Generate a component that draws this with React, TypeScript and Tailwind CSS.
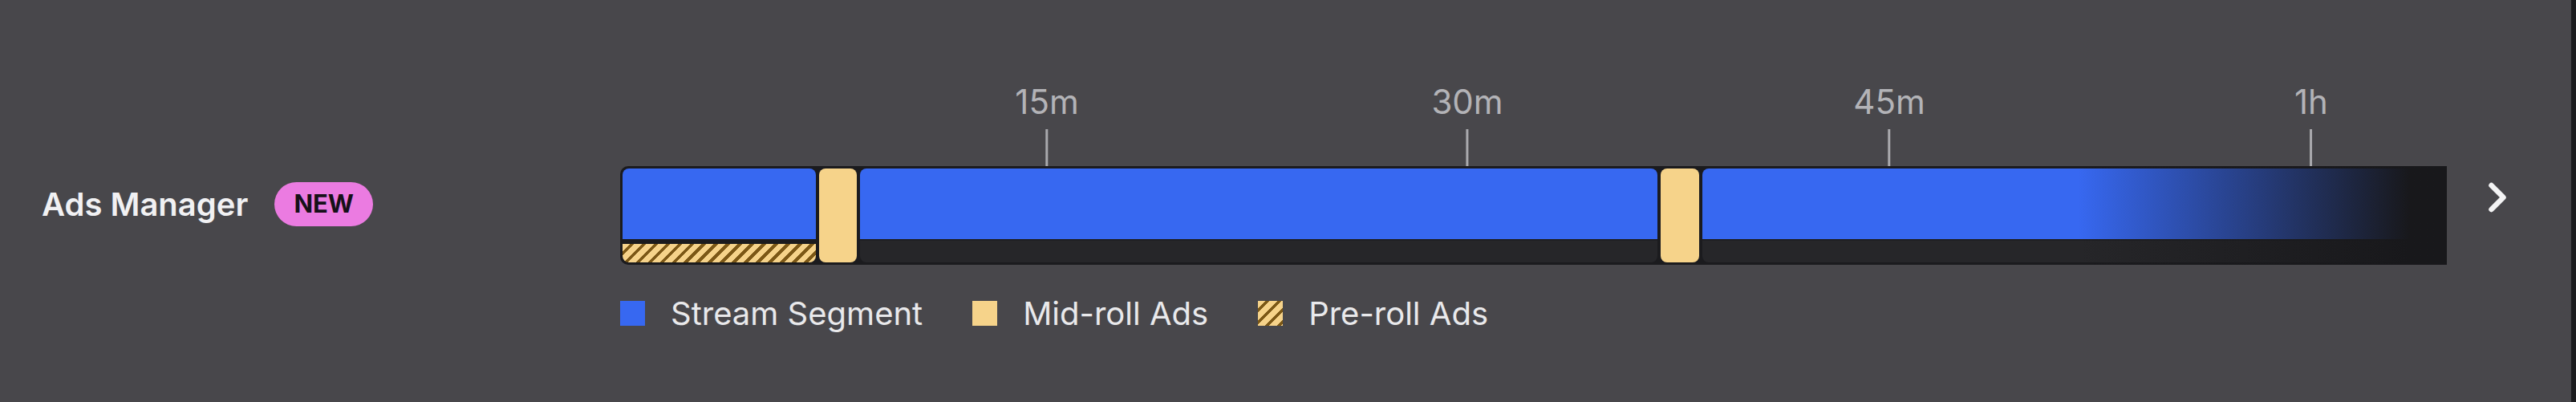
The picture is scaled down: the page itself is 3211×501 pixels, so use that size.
import React from 'react';
import { ChevronRight } from 'lucide-react';

const HATCH =
  'bg-[repeating-linear-gradient(135deg,#f6d38a_0px,#f6d38a_6.4px,#7c5816_6.4px,#7c5816_10.6px)]';

type Segment = { kind: 'stream' | 'mid'; width: number; preroll?: boolean };

const segments: Segment[] = [
  { kind: 'stream', width: 241, preroll: true },
  { kind: 'mid', width: 47 },
  { kind: 'stream', width: 994 },
  { kind: 'mid', width: 48 },
  { kind: 'stream', width: 1200 },
];

const ticks = [
  { label: '15m', x: 532 },
  { label: '30m', x: 1056 },
  { label: '45m', x: 1582 },
  { label: '1h', x: 2108 },
];

const legend = [
  { label: 'Stream Segment', swatch: 'bg-[#3768f1]' },
  { label: 'Mid-roll Ads', swatch: 'bg-[#f6d38a]' },
  { label: 'Pre-roll Ads', swatch: HATCH },
];

const App: React.FC = () => {
  return (
    <main className="flex w-[3211px] h-[501px] overflow-hidden bg-[#48474b] font-['Inter','Noto_Sans',sans-serif]">
      {/* Label */}
      <div className="w-[773px] shrink-0 pl-[52px] pt-[227px]">
        <div className="flex items-center gap-[33px]">
          <span className="text-[40px] leading-[55px] font-semibold text-[#f1f1f3]">
            Ads Manager
          </span>
          <span className="h-[55px] px-[24px] rounded-full bg-[#eb7be1] flex items-center text-[31px] font-bold text-[#161018]">
            NEW
          </span>
        </div>
      </div>

      {/* Timeline */}
      <div className="w-[2277px] shrink-0 flex flex-col pt-[107px]">
        <div className="relative h-[100px]">
          {ticks.map((t) => (
            <div
              key={t.label}
              className="absolute top-0 bottom-0 flex flex-col items-center -translate-x-1/2"
              style={{ left: t.x }}
            >
              <span className="text-[42px] leading-[40px] text-[#b3b3b7]">{t.label}</span>
              <div className="flex-1" />
              <div className="w-[3px] h-[46px] bg-[#a9a9ad]" />
            </div>
          ))}
        </div>

        <div className="relative flex h-[123px] p-[3px] gap-[4px] bg-[#1b1b1e] rounded-l-[10px] overflow-hidden">
          {segments.map((s, i) =>
            s.kind === 'mid' ? (
              <div key={i} className="shrink-0 h-full rounded-[8px] bg-[#f6d38a]" style={{ width: s.width }} />
            ) : (
              <div
                key={i}
                className="shrink-0 h-full flex flex-col rounded-[8px] overflow-hidden"
                style={{ width: s.width }}
              >
                <div className="h-[88px] bg-[#3768f1]" />
                {s.preroll ? (
                  <div className={`mt-[6px] flex-1 ${HATCH}`} />
                ) : (
                  <div className="flex-1 bg-[#262629] border-t-2 border-[#1e1e21]" />
                )}
              </div>
            )
          )}
          <div className="absolute top-0 bottom-0 right-0 w-[460px] bg-linear-to-r from-transparent to-[#18181b] to-90%" />
        </div>

        <div className="mt-[45px] flex items-center gap-[62px]">
          {legend.map((l) => (
            <div key={l.label} className="flex items-center gap-[32px]">
              <div className={`w-[31px] h-[31px] ${l.swatch}`} />
              <span className="text-[40px] leading-[31px] text-[#e9e9eb]">{l.label}</span>
            </div>
          ))}
        </div>
      </div>

      {/* Next */}
      <div className="w-[155px] shrink-0 pt-[216px] pl-[33px]">
        <ChevronRight size={60} strokeWidth={2.6} className="text-[#f4f4f5]" />
      </div>

      <div className="w-[6px] shrink-0 bg-[#1c1c1f]" />
    </main>
  );
};

export default App;
